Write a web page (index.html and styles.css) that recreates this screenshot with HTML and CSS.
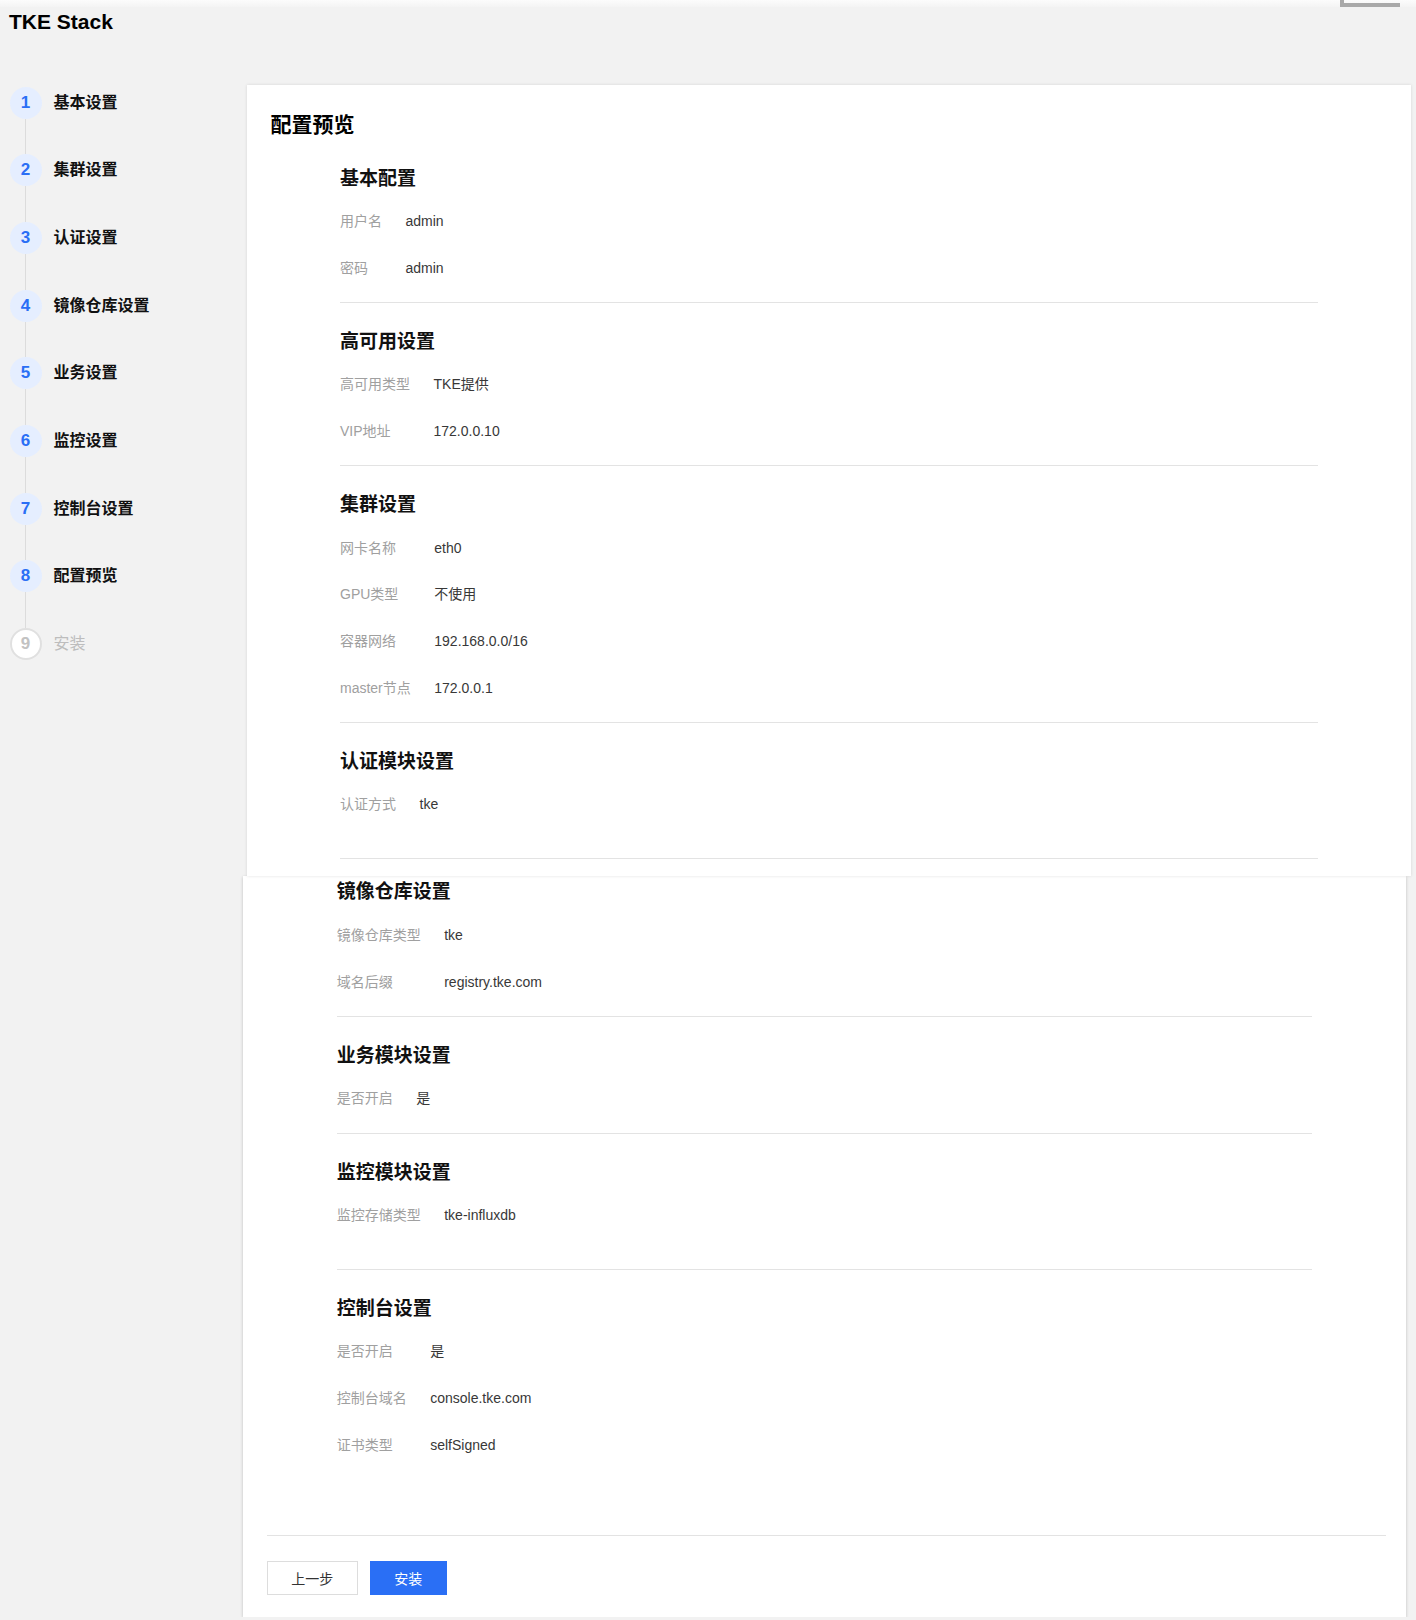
FILE: index.html
```html
<!DOCTYPE html>
<html lang="zh-CN">
<head>
<meta charset="utf-8">
<title>TKE Stack</title>
<link rel="stylesheet" href="styles.css">
</head>
<body>
<div class="topbar"><div class="topbar__mark"></div></div>
<header class="brand">TKE Stack</header>
<div class="layout">
  <nav class="steps">
    <div class="step step--active"><span class="step__num">1</span><span class="step__label">基本设置</span></div>
    <div class="step__line"></div>
    <div class="step step--active"><span class="step__num">2</span><span class="step__label">集群设置</span></div>
    <div class="step__line"></div>
    <div class="step step--active"><span class="step__num">3</span><span class="step__label">认证设置</span></div>
    <div class="step__line"></div>
    <div class="step step--active"><span class="step__num">4</span><span class="step__label">镜像仓库设置</span></div>
    <div class="step__line"></div>
    <div class="step step--active"><span class="step__num">5</span><span class="step__label">业务设置</span></div>
    <div class="step__line"></div>
    <div class="step step--active"><span class="step__num">6</span><span class="step__label">监控设置</span></div>
    <div class="step__line"></div>
    <div class="step step--active"><span class="step__num">7</span><span class="step__label">控制台设置</span></div>
    <div class="step__line"></div>
    <div class="step step--active"><span class="step__num">8</span><span class="step__label">配置预览</span></div>
    <div class="step__line"></div>
    <div class="step step--todo"><span class="step__num">9</span><span class="step__label">安装</span></div>
  </nav>
  <main class="main">
    <section class="panel panel--top">
      <h1 class="panel__title">配置预览</h1>
      <div class="group">
        <h2 class="group__title">基本配置</h2>
        <dl class="kv">
          <dt>用户名</dt><dd>admin</dd>
          <dt>密码</dt><dd>admin</dd>
        </dl>
      </div>
      <div class="group">
        <h2 class="group__title">高可用设置</h2>
        <dl class="kv">
          <dt>高可用类型</dt><dd>TKE提供</dd>
          <dt>VIP地址</dt><dd>172.0.0.10</dd>
        </dl>
      </div>
      <div class="group">
        <h2 class="group__title">集群设置</h2>
        <dl class="kv">
          <dt>网卡名称</dt><dd>eth0</dd>
          <dt>GPU类型</dt><dd>不使用</dd>
          <dt>容器网络</dt><dd>192.168.0.0/16</dd>
          <dt>master节点</dt><dd>172.0.0.1</dd>
        </dl>
      </div>
      <div class="group group--tall">
        <h2 class="group__title">认证模块设置</h2>
        <dl class="kv">
          <dt>认证方式</dt><dd>tke</dd>
        </dl>
      </div>
    </section>
    <section class="panel panel--bottom">
      <div class="group group--first">
        <h2 class="group__title">镜像仓库设置</h2>
        <dl class="kv">
          <dt>镜像仓库类型</dt><dd>tke</dd>
          <dt>域名后缀</dt><dd>registry.tke.com</dd>
        </dl>
      </div>
      <div class="group">
        <h2 class="group__title">业务模块设置</h2>
        <dl class="kv">
          <dt>是否开启</dt><dd>是</dd>
        </dl>
      </div>
      <div class="group group--tall2">
        <h2 class="group__title">监控模块设置</h2>
        <dl class="kv">
          <dt>监控存储类型</dt><dd>tke-influxdb</dd>
        </dl>
      </div>
      <div class="group group--last">
        <h2 class="group__title">控制台设置</h2>
        <dl class="kv">
          <dt>是否开启</dt><dd>是</dd>
          <dt>控制台域名</dt><dd>console.tke.com</dd>
          <dt>证书类型</dt><dd>selfSigned</dd>
        </dl>
      </div>
      <div class="footer">
        <button class="btn btn--default" type="button">上一步</button>
        <button class="btn btn--primary" type="button">安装</button>
      </div>
    </section>
  </main>
</div>
</body>
</html>
```

FILE: styles.css
```css
* { box-sizing: border-box; }

html, body {
  margin: 0;
  padding: 0;
}

body {
  background: #f2f2f2;
  font-family: "Liberation Sans", "Noto Sans CJK SC", sans-serif;
  color: #333;
  width: 1416px;
}

.topbar {
  height: 7px;
  background: linear-gradient(#fcfcfc, #f4f4f4);
  display: flex;
  justify-content: flex-end;
}

.topbar__mark {
  width: 60px;
  height: 7px;
  margin-right: 16px;
  border-left: 4px solid #a9a9a9;
  border-bottom: 4px solid #a9a9a9;
}

.brand {
  height: 78px;
  padding: 3px 0 0 9px;
  font-size: 21px;
  line-height: 24px;
  font-weight: bold;
  color: #000;
}

.layout {
  display: flex;
  align-items: flex-start;
}

.steps {
  width: 246.5px;
  flex: none;
  padding: 1.5px 0 0 9.5px;
  display: flex;
  flex-direction: column;
}

.step {
  display: flex;
  align-items: center;
  height: 32px;
}

.step__num {
  width: 32px;
  height: 32px;
  border-radius: 50%;
  flex: none;
  display: flex;
  align-items: center;
  justify-content: center;
  font-size: 17px;
  font-weight: bold;
  font-family: "Liberation Sans", sans-serif;
}

.step__label {
  margin-left: 12px;
  font-size: 16px;
  line-height: 22px;
  font-weight: bold;
  color: #111;
}

.step--active .step__num {
  background: #e5eeff;
  color: #2a6ff5;
}

.step--todo .step__num {
  background: #fff;
  border: 2px solid #e0e0e0;
  color: #c2c2c2;
}

.step--todo .step__label {
  color: #bdbdbd;
  font-weight: normal;
}

.step__line {
  width: 1px;
  height: 35.7px;
  margin-left: 15.5px;
  background: #dcdcdc;
}

.main {
  flex: 1;
  padding-right: 5px;
  display: flex;
  flex-direction: column;
}

.panel {
  background: #fff;
}

.panel--top {
  padding: 24.5px 0 16.8px;
  box-shadow: 0 0 3px rgba(0, 0, 0, 0.12);
  position: relative;
  z-index: 1;
}

.panel--bottom {
  margin-left: -3.8px;
  margin-right: 5.4px;
  box-shadow: 0 1px 3px rgba(0, 0, 0, 0.22);
  padding-bottom: 22.7px;
}

.panel__title {
  margin: 0;
  padding-left: 24px;
  font-size: 21px;
  line-height: 30px;
  font-weight: bold;
  color: #000;
}

.group {
  margin: 0 93.5px;
  padding: 25px 0 24.3px;
  border-bottom: 1px solid #e3e3e3;
}

.panel--bottom .group {
  margin: 0 94px;
}

.panel--bottom .group--first {
  padding-top: 2.5px;
}

.group--tall {
  padding-bottom: 43.8px;
}

.panel--bottom .group--tall2 {
  padding-bottom: 43.8px;
}

.panel--bottom .group--last {
  border-bottom: 0;
  padding-bottom: 0;
}

.group__title {
  margin: 0 0 18.5px;
  font-size: 19px;
  line-height: 28px;
  font-weight: bold;
  color: #111;
}

.kv {
  margin: 0;
  display: grid;
  grid-template-columns: max-content 1fr;
  column-gap: 23.5px;
  row-gap: 26.6px;
  font-size: 14px;
  line-height: 20px;
}

.kv dt {
  color: #a0a0a0;
}

.kv dd {
  margin: 0;
  color: #383838;
}

.footer {
  margin: 80.5px 20px 0 24px;
  padding-top: 24.5px;
  border-top: 1px solid #e3e3e3;
  display: flex;
  gap: 12px;
}

.btn {
  height: 34px;
  font-family: "Liberation Sans", "Noto Sans CJK SC", sans-serif;
  font-size: 14px;
  border-radius: 0;
  cursor: pointer;
}

.btn--default {
  width: 91px;
  background: #fff;
  border: 1px solid #dddddd;
  color: #333;
}

.btn--primary {
  width: 77px;
  background: #2a6ff5;
  border: 1px solid #2a6ff5;
  color: #fff;
}
```
